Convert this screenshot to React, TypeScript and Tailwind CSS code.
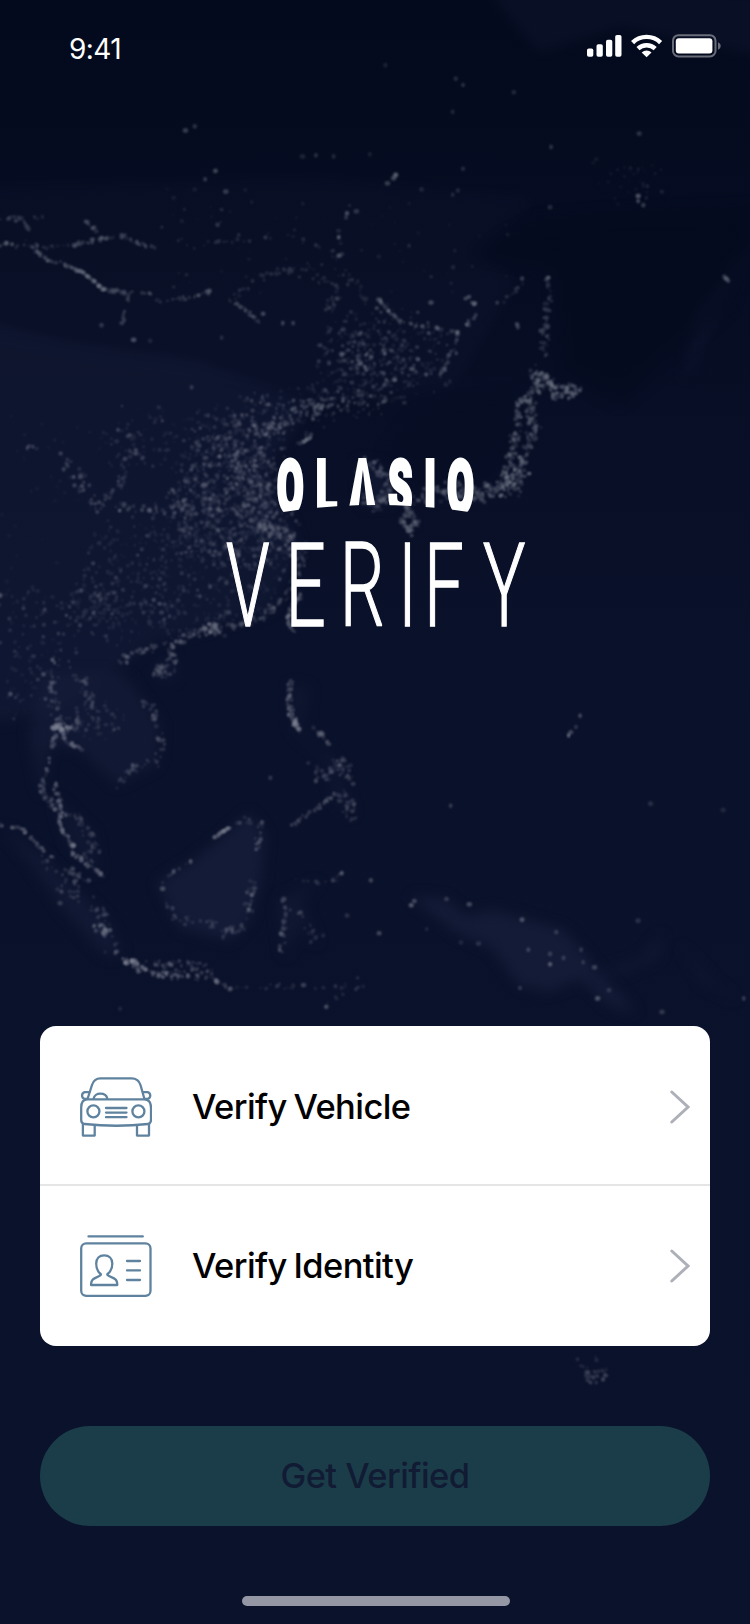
import React from "react";

type Pt = [number, number];

function createRandom(seed: number) {
  let s = seed;
  return () => {
    s = (s + 0x6d2b79f5) | 0;
    let t = Math.imul(s ^ (s >>> 15), 1 | s);
    t = (t + Math.imul(t ^ (t >>> 7), 61 | t)) ^ t;
    return ((t ^ (t >>> 14)) >>> 0) / 4294967296;
  };
}

// Roads and coastlines: points, number of lights, spread, brightness
const routes: { p: Pt[]; n: number; w: number; o: number }[] = [
  { p: [[0, 236], [35, 238], [68, 237], [100, 230], [118, 228], [140, 238], [157, 242]], n: 70, w: 2, o: 0.26 },
  { p: [[30, 238], [45, 252], [60, 254], [78, 262], [92, 272], [100, 280]], n: 56, w: 1.2, o: 0.3 },
  { p: [[78, 262], [88, 269], [100, 280]], n: 30, w: 0.6, o: 0.26 },
  { p: [[100, 280], [125, 282], [145, 283], [153, 290], [185, 288], [202, 281], [210, 286]], n: 50, w: 1.8, o: 0.24 },
  { p: [[222, 290], [235, 298], [250, 311]], n: 22, w: 1.2, o: 0.28 },
  { p: [[125, 284], [121, 300], [118, 312]], n: 14, w: 1.5, o: 0.22 },
  { p: [[225, 291], [238, 275], [258, 264], [285, 260], [318, 259]], n: 34, w: 3, o: 0.18 },
  { p: [[0, 210], [25, 212], [42, 208]], n: 20, w: 2, o: 0.2 },
  { p: [[22, 212], [28, 222], [25, 235]], n: 12, w: 1, o: 0.18 },
  { p: [[83, 214], [90, 220], [98, 226]], n: 10, w: 1.8, o: 0.28 },
  { p: [[180, 237], [230, 233], [275, 228], [300, 235], [328, 245], [345, 248]], n: 26, w: 2, o: 0.18 },
  { p: [[300, 268], [325, 275], [325, 288], [315, 300]], n: 30, w: 4, o: 0.18 },
  { p: [[330, 262], [345, 275], [352, 290]], n: 16, w: 3, o: 0.18 },
  { p: [[365, 288], [373, 298], [383, 308]], n: 24, w: 1, o: 0.28 },
  { p: [[383, 308], [400, 314], [420, 316], [442, 321]], n: 28, w: 1.2, o: 0.24 },
  { p: [[442, 321], [436, 340], [426, 362]], n: 30, w: 2, o: 0.24 },
  { p: [[450, 285], [463, 298], [458, 306], [443, 320]], n: 18, w: 1.6, o: 0.28 },
  { p: [[480, 292], [500, 280], [505, 270]], n: 14, w: 2, o: 0.16 },
  { p: [[528, 266], [530, 285], [527, 310], [525, 342]], n: 50, w: 3.5, o: 0.24 },
  { p: [[515, 356], [520, 368], [512, 384], [503, 392]], n: 55, w: 5, o: 0.3 },
  { p: [[520, 366], [535, 376], [560, 377], [545, 380]], n: 75, w: 6, o: 0.3 },
  { p: [[522, 358], [536, 374], [535, 385]], n: 30, w: 3, o: 0.28 },
  { p: [[500, 384], [500, 402], [498, 420], [495, 440], [485, 460]], n: 85, w: 4, o: 0.28 },
  { p: [[512, 388], [517, 412], [511, 430], [503, 450], [492, 466]], n: 100, w: 4.5, o: 0.28 },
  { p: [[500, 468], [480, 474], [460, 476], [440, 477], [420, 475], [402, 482]], n: 160, w: 8, o: 0.3 },
  { p: [[502, 456], [485, 470]], n: 44, w: 8, o: 0.34 },
  { p: [[392, 490], [402, 503], [394, 514], [388, 498]], n: 60, w: 3.5, o: 0.3 },
  { p: [[345, 452], [362, 448], [375, 462], [374, 480], [358, 488], [350, 478]], n: 110, w: 6, o: 0.26 },
  { p: [[24, 432], [36, 432]], n: 8, w: 2, o: 0.26 },
  { p: [[58, 440], [75, 460], [92, 490], [100, 492]], n: 32, w: 6, o: 0.24 },
  { p: [[130, 420], [126, 440], [118, 460], [105, 482]], n: 36, w: 5, o: 0.24 },
  { p: [[92, 488], [150, 494], [190, 488], [220, 480]], n: 60, w: 6, o: 0.26 },
  { p: [[230, 408], [250, 420], [275, 405], [300, 395], [330, 385]], n: 80, w: 8, o: 0.3 },
  { p: [[288, 429], [300, 423]], n: 14, w: 1.2, o: 0.34 },
  { p: [[255, 510], [275, 520], [292, 530], [288, 545]], n: 75, w: 7, o: 0.28 },
  { p: [[288, 545], [285, 565], [268, 582], [252, 597]], n: 45, w: 3.5, o: 0.26 },
  { p: [[115, 642], [130, 630], [165, 622], [200, 607], [230, 603], [252, 595]], n: 90, w: 4.5, o: 0.25 },
  { p: [[195, 606], [212, 608]], n: 34, w: 6, o: 0.36 },
  { p: [[166, 626], [167, 638], [150, 648], [158, 654], [170, 645]], n: 52, w: 3.5, o: 0.24 },
  { p: [[291, 574], [281, 586], [279, 602], [284, 612]], n: 40, w: 2, o: 0.34 },
  { p: [[58, 705], [54, 685], [50, 660], [52, 632]], n: 38, w: 3, o: 0.28 },
  { p: [[58, 705], [76, 694], [86, 680], [82, 660]], n: 42, w: 6, o: 0.24 },
  { p: [[48, 702], [76, 704]], n: 28, w: 1.6, o: 0.34 },
  { p: [[56, 698], [60, 708]], n: 20, w: 3, o: 0.4 },
  { p: [[58, 703], [64, 716], [80, 724]], n: 26, w: 1.4, o: 0.32 },
  { p: [[53, 708], [49, 730], [43, 747], [39, 762], [52, 780]], n: 44, w: 2, o: 0.24 },
  { p: [[135, 675], [145, 680], [154, 705], [156, 730], [140, 740], [126, 742], [112, 758]], n: 50, w: 4.5, o: 0.24 },
  { p: [[52, 755], [58, 775], [58, 798], [68, 812], [72, 825], [86, 836], [100, 846]], n: 95, w: 2, o: 0.34 },
  { p: [[40, 762], [50, 775], [60, 788]], n: 24, w: 4, o: 0.24 },
  { p: [[62, 786], [78, 792], [90, 808], [90, 824], [80, 834]], n: 46, w: 5, o: 0.24 },
  { p: [[0, 797], [22, 801], [34, 813], [42, 822], [52, 828]], n: 44, w: 1.4, o: 0.28 },
  { p: [[46, 826], [60, 855], [85, 870], [100, 885], [112, 920]], n: 50, w: 7, o: 0.2 },
  { p: [[66, 840], [80, 850]], n: 24, w: 6, o: 0.26 },
  { p: [[90, 893], [104, 898], [98, 903]], n: 30, w: 4, o: 0.34 },
  { p: [[118, 927], [130, 932], [150, 940], [175, 943], [205, 946], [222, 954]], n: 80, w: 2.8, o: 0.34 },
  { p: [[145, 933], [170, 932], [205, 937]], n: 50, w: 6, o: 0.28 },
  { p: [[120, 927], [132, 930]], n: 20, w: 2.5, o: 0.4 },
  { p: [[222, 954], [260, 952], [300, 954], [330, 953], [348, 943]], n: 24, w: 2, o: 0.16 },
  { p: [[313, 971], [330, 960], [352, 951]], n: 10, w: 1.5, o: 0.14 },
  { p: [[207, 809], [214, 803], [222, 799]], n: 24, w: 0.8, o: 0.34 },
  { p: [[228, 796], [236, 790], [253, 800], [247, 820]], n: 22, w: 3, o: 0.24 },
  { p: [[245, 850], [240, 882], [225, 904], [215, 898]], n: 34, w: 5, o: 0.22 },
  { p: [[185, 832], [168, 842], [154, 848], [157, 868], [168, 888], [200, 892], [225, 898]], n: 38, w: 4, o: 0.2 },
  { p: [[272, 918], [272, 900], [276, 872]], n: 20, w: 4, o: 0.22 },
  { p: [[283, 848], [306, 852], [322, 850], [330, 842]], n: 14, w: 2, o: 0.2 },
  { p: [[290, 882], [302, 900], [305, 910]], n: 16, w: 6, o: 0.16 },
  { p: [[281, 656], [279, 678], [283, 694], [288, 706]], n: 50, w: 2.5, o: 0.28 },
  { p: [[280, 690], [288, 704]], n: 24, w: 2, o: 0.38 },
  { p: [[302, 702], [312, 711], [318, 718]], n: 18, w: 1.6, o: 0.26 },
  { p: [[302, 738], [312, 750], [330, 735], [336, 760]], n: 52, w: 8, o: 0.24 },
  { p: [[282, 796], [298, 786], [326, 766]], n: 34, w: 2, o: 0.24 },
  { p: [[328, 768], [342, 775], [334, 790]], n: 36, w: 7, o: 0.22 },
  { p: [[560, 1316], [575, 1322], [582, 1330], [572, 1335]], n: 30, w: 9, o: 0.2 },
];

// Populated regions: outline, number of lights, brightness
const regions: { p: Pt[]; n: number; o: number }[] = [
  { p: [[310, 320], [365, 295], [440, 325], [425, 370], [385, 385], [330, 395], [305, 370]], n: 330, o: 0.2 },
  { p: [[325, 335], [390, 325], [410, 355], [350, 385], [330, 370]], n: 120, o: 0.26 },
  { p: [[185, 410], [255, 380], [330, 375], [375, 388], [310, 408], [270, 425], [262, 445], [190, 450]], n: 330, o: 0.23 },
  { p: [[180, 440], [262, 440], [272, 480], [290, 530], [250, 545], [180, 530], [165, 480]], n: 720, o: 0.22 },
  { p: [[225, 425], [255, 430], [262, 500], [280, 530], [240, 515], [218, 460]], n: 220, o: 0.24 },
  { p: [[95, 510], [180, 500], [280, 530], [282, 565], [248, 595], [120, 620], [75, 590]], n: 560, o: 0.17 },
  { p: [[60, 575], [110, 570], [105, 605], [80, 615]], n: 70, o: 0.22 },
  { p: [[0, 560], [60, 580], [80, 660], [30, 690], [0, 700]], n: 130, o: 0.18 },
  { p: [[120, 395], [240, 405], [200, 450], [140, 450], [90, 440]], n: 130, o: 0.17 },
  { p: [[75, 680], [115, 680], [112, 710], [75, 712]], n: 50, o: 0.18 },
  { p: [[0, 400], [110, 400], [120, 560], [0, 580]], n: 50, o: 0.08 },
  { p: [[160, 180], [480, 200], [500, 280], [340, 300], [160, 280]], n: 80, o: 0.12 },
  { p: [[565, 155], [635, 160], [630, 190], [605, 195]], n: 34, o: 0.12 },
];

// Isolated towns: x, y, brightness
const towns: [number, number, number][] = [
  [179, 126, 0.3], [188, 122, 0.28], [208, 165, 0.35], [198, 173, 0.3], [218, 185, 0.32], [210, 217, 0.25],
  [382, 169, 0.5], [380, 172, 0.35], [374, 177, 0.3], [335, 206, 0.4], [334, 210, 0.25], [344, 204, 0.25], [327, 229, 0.5],
  [327, 247, 0.35], [440, 76, 0.22], [447, 82, 0.25], [437, 108, 0.22], [496, 89, 0.22], [532, 142, 0.25],
  [617, 129, 0.25], [616, 194, 0.4], [621, 198, 0.3], [616, 189, 0.3], [531, 200, 0.22], [372, 63, 0.15],
  [305, 150, 0.25], [322, 151, 0.22], [292, 151, 0.18], [357, 149, 0.15], [407, 183, 0.18], [447, 163, 0.2],
  [442, 184, 0.2], [437, 188, 0.2], [701, 269, 0.45], [703, 271, 0.35], [699, 267, 0.25], [504, 269, 0.3],
  [499, 313, 0.35], [500, 316, 0.3], [416, 292, 0.35], [129, 328, 0.4], [145, 329, 0.18], [98, 314, 0.25],
  [273, 312, 0.35], [283, 312, 0.3], [254, 303, 0.35], [185, 374, 0.25], [214, 326, 0.2], [100, 279, 0.4], [202, 281, 0.4],
  [442, 321, 0.45], [330, 342, 0.45], [348, 351, 0.4], [398, 356, 0.35], [72, 237, 0.35], [6, 235, 0.4],
  [549, 710, 0.55], [551, 707, 0.35], [556, 702, 0.28], [560, 691, 0.4], [435, 778, 0.3], [628, 776, 0.22],
  [698, 782, 0.15], [330, 843, 0.4], [358, 850, 0.35], [397, 874, 0.45], [400, 870, 0.35], [431, 868, 0.28],
  [453, 873, 0.35], [504, 888, 0.4], [537, 900, 0.28], [510, 917, 0.3], [366, 901, 0.38], [531, 931, 0.45],
  [531, 921, 0.25], [544, 925, 0.25], [563, 929, 0.28], [574, 934, 0.32], [561, 917, 0.25], [577, 964, 0.42],
  [588, 956, 0.22], [502, 954, 0.25], [639, 977, 0.28], [616, 889, 0.22], [718, 964, 0.3], [315, 972, 0.4],
  [293, 951, 0.32], [222, 955, 0.42], [240, 878, 0.4], [243, 864, 0.4], [157, 858, 0.35], [168, 841, 0.32],
  [184, 832, 0.35], [270, 917, 0.42], [272, 902, 0.35], [290, 881, 0.3], [274, 868, 0.3], [116, 974, 0.16],
  [462, 911, 0.2], [445, 910, 0.16], [412, 897, 0.18], [335, 884, 0.2], [567, 1325, 0.32], [573, 1330, 0.28],
  [0, 575, 0.4], [128, 739, 0.42], [42, 651, 0.36], [10, 670, 0.34], [83, 660, 0.32], [261, 751, 0.26], [253, 794, 0.34],
  [305, 754, 0.34], [320, 745, 0.34], [98, 844, 0.42], [70, 825, 0.4], [58, 872, 0.26], [94, 878, 0.28], [112, 919, 0.34],
];

const landMasses: { d: string; o: number }[] = [
  { d: "M-20 310 L60 330 L190 350 L300 390 L260 450 L290 530 L260 590 L150 620 L110 650 L40 690 L-20 700 Z", o: 0.45 },
  { d: "M-20 180 L300 170 L520 190 L460 245 L500 270 L440 370 L330 390 L-20 330 Z", o: 0.18 },
  { d: "M40 650 L120 650 L155 700 L152 738 L112 758 L75 722 L48 720 L40 770 L28 710 Z", o: 0.6 },
  { d: "M240 785 L256 805 L252 850 L240 890 L222 908 L172 895 L152 852 L185 832 L215 808 Z", o: 0.8 },
  { d: "M0 797 L40 825 L75 860 L105 890 L118 922 L100 922 L62 880 L30 835 Z", o: 0.6 },
  { d: "M52 770 L90 805 L96 845 L66 815 Z", o: 0.5 },
  { d: "M395 865 L430 868 L450 885 L475 878 L545 898 L580 940 L615 978 L590 972 L560 945 L530 958 L500 950 L475 915 L440 900 Z", o: 0.8 },
  { d: "M280 660 L300 665 L290 705 L325 735 L342 790 L325 775 L310 730 L282 705 Z", o: 0.4 },
  { d: "M268 870 L310 850 L290 870 L308 915 L290 890 L275 925 Z", o: 0.5 },
  { d: "M575 940 L620 925 L640 900 L635 925 L600 940 Z", o: 0.6 },
  { d: "M655 910 L690 950 L715 968 L680 950 Z", o: 0.5 },
  { d: "M345 445 L370 450 L378 485 L352 488 Z", o: 0.5 },
  { d: "M470 -10 L744 -5 L744 55 L600 25 L520 50 Z", o: 0.3 },
  { d: "M730 230 L660 370 L672 300 Z", o: 0.35 },
  { d: "M145 640 L172 635 L170 655 L155 660 Z", o: 0.4 },
];

function inside([x, y]: Pt, poly: Pt[]) {
  let hit = false;
  for (let i = 0, j = poly.length - 1; i < poly.length; j = i++) {
    const [xi, yi] = poly[i];
    const [xj, yj] = poly[j];
    if (yi > y !== yj > y && x < ((xj - xi) * (y - yi)) / (yj - yi) + xi) hit = !hit;
  }
  return hit;
}

function buildLights() {
  const rnd = createRandom(4127);
  const buckets: Record<string, string[]> = {};
  const add = (x: number, y: number, r: number, o: number) => {
    const key = (Math.round(Math.max(0.06, o) * 16) / 16).toFixed(3);
    const a = r * (0.75 + rnd() * 0.5);
    (buckets[key] ||= []).push(
      `M${(x - a).toFixed(1)} ${y.toFixed(1)}a${a.toFixed(2)} ${r.toFixed(2)} 0 1 0 ${(2 * a).toFixed(2)} 0a${a.toFixed(2)} ${r.toFixed(2)} 0 1 0 ${(-2 * a).toFixed(2)} 0`
    );
  };
  for (const { p, n, w, o } of routes) {
    const lens = p.slice(1).map((q, i) => Math.hypot(q[0] - p[i][0], q[1] - p[i][1]));
    const total = lens.reduce((a, b) => a + b, 0);
    for (let k = 0; k < n; k++) {
      let t = rnd() * total;
      let i = 0;
      while (i < lens.length - 1 && t > lens[i]) t -= lens[i++];
      const f = t / lens[i];
      const g = () => (rnd() + rnd() - 1) * w * 1.4;
      add(p[i][0] + (p[i + 1][0] - p[i][0]) * f + g(), p[i][1] + (p[i + 1][1] - p[i][1]) * f + g(), 1 + rnd() * 1.1, o * (0.5 + rnd() * 1.1));
    }
  }
  for (const { p, n, o } of regions) {
    const xs = p.map((q) => q[0]);
    const ys = p.map((q) => q[1]);
    const x0 = Math.min(...xs);
    const y0 = Math.min(...ys);
    const w = Math.max(...xs) - x0;
    const h = Math.max(...ys) - y0;
    let placed = 0;
    while (placed < n) {
      const q: Pt = [x0 + rnd() * w, y0 + rnd() * h];
      if (!inside(q, p)) continue;
      placed++;
      add(q[0] + (rnd() - 0.5) * 20, q[1] + (rnd() - 0.5) * 20, 0.9 + rnd() * 1.2, o * (0.4 + rnd() * rnd() * 2));
    }
  }
  for (const [x, y, o] of towns) add(x, y, 2.2, o * 1.2);
  return Object.entries(buckets).map(([o, d]) => ({ o: Number(o), d: d.join("") }));
}

const lights = buildLights();

function NightMap() {
  return (
    <svg className="absolute inset-0 h-full w-full" viewBox="0 0 724 1568" preserveAspectRatio="none" aria-hidden="true">
      <defs>
        <filter id="land" x="-30%" y="-30%" width="160%" height="160%" colorInterpolationFilters="sRGB">
          <feGaussianBlur stdDeviation="6" />
        </filter>
        <filter id="glow" colorInterpolationFilters="sRGB">
          <feGaussianBlur stdDeviation="0.85" />
        </filter>
      </defs>
      {landMasses.map((l, i) => (
        <g key={i} opacity={l.o}>
          <path d={l.d} fill="#171e3a" filter="url(#land)" />
        </g>
      ))}
      <g opacity="0.5">
        <path d="M460 245 L520 212 L600 205 L744 200 L700 300 L600 390 L540 360 L535 260 Z" fill="#040a1c" filter="url(#land)" />
      </g>
      <g opacity="0.7">
        <path d="M400 400 L490 380 L495 440 L470 462 L400 470 L370 440 Z" fill="#070d23" filter="url(#land)" />
      </g>
      <g opacity="0.72">
        {lights.map((l, i) => (
          <g key={i} opacity={l.o}>
            <path d={l.d} fill="#b9bcc8" filter="url(#glow)" />
          </g>
        ))}
      </g>
    </svg>
  );
}

function StatusIcons() {
  return (
    <svg width="136" height="26" viewBox="586 33 136 26" fill="#fff" aria-hidden="true">
      <rect x="587" y="48.5" width="6.3" height="8.3" rx="1.8" />
      <rect x="596.5" y="44.3" width="6.3" height="12.5" rx="1.8" />
      <rect x="606" y="39.7" width="6.3" height="17.1" rx="1.8" />
      <rect x="615.2" y="35" width="6.3" height="21.8" rx="1.8" />
      <g fill="none" stroke="#fff" strokeWidth="4.4">
        <path d="M632.6 42.6a20 20 0 0 1 28 0" />
        <path d="M638 48.6a12.6 12.6 0 0 1 17.2 0" />
      </g>
      <path d="M641.7 52.4a7.4 7.4 0 0 1 9.8 0l-4.9 4.9z" />
      <rect x="673" y="35.2" width="42.5" height="21.2" rx="5.5" fill="none" stroke="#fff" strokeOpacity=".4" strokeWidth="2" />
      <rect x="675.8" y="38.3" width="36.6" height="15.3" rx="3" />
      <path d="M718 42.3c3.6 1.3 3.6 6 0 7.5z" opacity=".4" />
    </svg>
  );
}

function Logo() {
  return (
    <svg width="330" height="220" viewBox="210 440 330 220" role="img" aria-label="Olasio Verify" className="overflow-visible">
      <defs>
        <mask id="cut" maskUnits="userSpaceOnUse" x="210" y="440" width="330" height="90">
          <path d="M270 450H482V514L474 512.7Q376 497.5 278 512.7L270 514Z" fill="#fff" />
          <path d="M362.9 470L367.6 512H358.2Z" fill="#000" />
        </mask>
      </defs>
      <g mask="url(#cut)">
        <text
          transform="translate(0 512.6) scale(.52 1)"
          x="532.500 607.500 671.500 746.500 816 860"
          y="0"
          className="fill-white stroke-white stroke-[4px] font-[Roboto] text-[74px] font-black"
        >
          OLASIO
        </text>
      </g>
      <text
        transform="translate(0 625.5) scale(.61 1)"
        x="370.500 468 557 652.500 695 792"
        y="0"
        className="fill-white stroke-white stroke-[1.5px] font-[Roboto] text-[116px] font-light"
      >
        VERIFY
      </text>
    </svg>
  );
}

function CarIcon() {
  return (
    <svg width="72" height="62" viewBox="0 0 72 62" fill="none" stroke="#5f839f" strokeWidth="2.3" strokeLinecap="round" strokeLinejoin="round" aria-hidden="true">
      <path d="M7.7 22.5L12 9Q14 2.3 20.5 2.3H51.5Q58.5 2.3 60.5 9L64.3 22.5" />
      <path d="M7.5 23.3H64Q71 23.3 71 31.5V44Q71 47.3 68 48Q36.5 51.5 4.5 48Q1.2 47.3 1.2 44V31.5Q1.2 23.3 7.5 23.3Z" />
      <path d="M9.2 16.2H4.8A3.4 3.4 0 0 0 4.5 22.8H7M63 16.2H67.5A3.4 3.4 0 0 1 67.8 22.8H65" />
      <path d="M13.7 22.5C14.5 16 26 16 27.3 22.5" />
      <path d="M2.9 48V59.6H14.7V49.2M57 49.2V59.6H69V48" />
      <circle cx="13.4" cy="35.4" r="6" />
      <circle cx="58.4" cy="35.4" r="6" />
      <path d="M26 32H46.5M26 36.6H46.5M26 41.2H46.5" />
    </svg>
  );
}

function IdentityIcon() {
  return (
    <svg width="72" height="64" viewBox="0 0 72 64" fill="none" stroke="#5f839f" strokeWidth="2.3" strokeLinecap="round" strokeLinejoin="round" aria-hidden="true">
      <path d="M8.5 2.4H62.8" />
      <rect x="1.2" y="9.4" width="69.3" height="52.4" rx="5" />
      <path d="M47 27H60M47 36.4H60M47 46H60" />
      <path d="M11 51H37.3C37.3 47 36.5 45.6 34 44.4L29 42C27.4 41.2 27 40.5 27.5 40C30.8 37.6 32.3 34.5 32.3 29.5C32.3 24.3 29 21.3 24.2 21.3C19.3 21.3 16.2 24.3 16.2 29.5C16.2 34.5 17.5 37.6 20.7 40C21.2 40.5 20.8 41.2 19.3 42L14.5 44.4C12 45.6 11 47 11 51Z" />
    </svg>
  );
}

function Chevron() {
  return (
    <svg width="20" height="34" viewBox="0 0 20 34" fill="none" stroke="#adb0b8" strokeWidth="3" strokeLinecap="round" aria-hidden="true">
      <path d="M1.8 2L18 17L1.8 32" />
    </svg>
  );
}

function Row({ icon, label, divider }: { icon: React.ReactNode; label: string; divider?: boolean }) {
  return (
    <button className={`flex h-40 w-full items-center pr-5 pl-10 ${divider ? "border-b-2 border-[#e5e5e5] pt-1" : ""}`}>
      <span className="w-[112px]">{icon}</span>
      <span className="flex-1 text-left text-[34.5px] leading-10 font-medium tracking-[-0.58px] text-black [word-spacing:-2px]">{label}</span>
      <Chevron />
    </button>
  );
}

export default function App() {
  return (
    <div className="relative h-[1624px] w-[750px] overflow-hidden bg-linear-to-b from-[#040a1d] via-[#0a112a] via-40% to-[#0b122b] font-[Inter,'Liberation_Sans',sans-serif]">
      <NightMap />
      <div className="relative flex h-full flex-col">
        <header className="flex h-[100px] items-start justify-between pr-7 pl-[69px]">
          <span className="pt-[29px] text-[28px] leading-10 tracking-[-0.6px] text-white">9:41</span>
          <span className="pt-[33px]">
            <StatusIcons />
          </span>
        </header>
        <div className="flex h-[926px] justify-center pt-[340px]">
          <Logo />
        </div>
        <section className="mx-10 flex flex-col overflow-hidden rounded-[16px] bg-white">
          <Row icon={<CarIcon />} label="Verify Vehicle" divider />
          <Row icon={<IdentityIcon />} label="Verify Identity" />
        </section>
        <button className="mx-10 mt-20 h-[100px] rounded-full bg-[#1b3d4a] pb-px text-[34.5px] font-medium tracking-[-0.55px] text-[#111b33]">
          Get Verified
        </button>
        <div className="mx-auto mt-[70px] h-2.5 w-[268px] translate-x-px rounded-full bg-[#9697a4]" />
      </div>
    </div>
  );
}
